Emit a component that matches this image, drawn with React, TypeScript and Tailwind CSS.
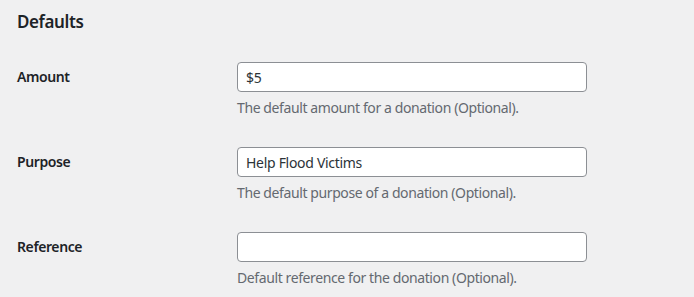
import React from 'react';

interface Field {
  id: string;
  label: string;
  value: string;
  help: string;
}

const FIELDS: Field[] = [
  { id: 'amount', label: 'Amount', value: '$5', help: 'The default amount for a donation (Optional).' },
  { id: 'purpose', label: 'Purpose', value: 'Help Flood Victims', help: 'The default purpose of a donation (Optional).' },
  { id: 'reference', label: 'Reference', value: '', help: 'Default reference for the donation (Optional).' },
];

export default function App() {
  return (
    <div className="min-h-screen bg-[#f0f0f1] pl-[17px] text-[#1d2327] font-['Noto_Sans',sans-serif]">
      <h2 className="pt-[11px] text-[17px] font-semibold leading-[1.3] tracking-[-0.4px]">Defaults</h2>
      <div className="mt-[14px]">
        {FIELDS.map(f => (
          <div key={f.id} className="flex h-[85px]">
            <label
              htmlFor={f.id}
              className="w-[220px] shrink-0 pt-[21px] text-[14px] font-semibold leading-[1.3] tracking-[-0.4px]"
            >
              {f.label}
            </label>
            <div className="pt-[15px]">
              <input
                id={f.id}
                type="text"
                defaultValue={f.value}
                className="block h-[30px] w-[350px] rounded-[4px] border border-[#8c8f94] bg-white px-[8px] text-[14px] tracking-[-0.3px] text-[#2c3338] outline-none"
              />
              <p className="mt-[5px] text-[14px] leading-[1.5] tracking-[-0.4px] text-[#646970]">{f.help}</p>
            </div>
          </div>
        ))}
      </div>
    </div>
  );
}
